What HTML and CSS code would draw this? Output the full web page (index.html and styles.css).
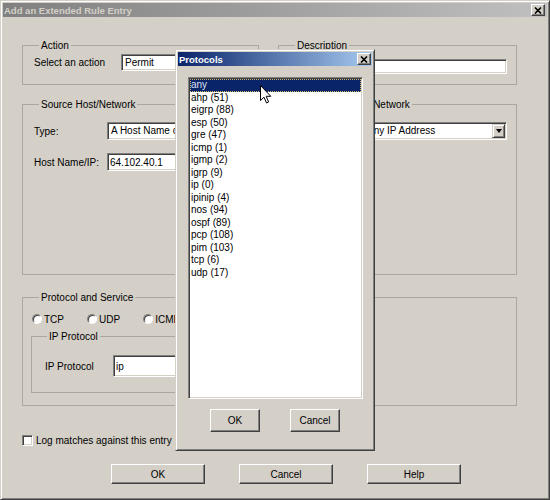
FILE: index.html
```html
<!doctype html>
<html>
<head>
<meta charset="utf-8">
<title>Add an Extended Rule Entry</title>
<link rel="stylesheet" href="styles.css">
</head>
<body>
<div class="window">
  <div class="titlebar inactive">
    <span class="title">Add an Extended Rule Entry</span>
    <span class="close"><svg width="8" height="7" viewBox="0 0 8 7"><path d="M1 0.5 L7 6.5 M7 0.5 L1 6.5" stroke="#000" stroke-width="1.6"/></svg></span>
  </div>

  <div class="content">
    <div class="row top-row">
      <fieldset class="group action">
        <legend>Action</legend>
        <div class="field">
          <label class="lbl wide">Select an action</label>
          <div class="combo"><span class="combo-text">Permit</span><span class="arrow"></span></div>
        </div>
      </fieldset>
      <fieldset class="group desc">
        <legend>Description</legend>
        <input type="text" class="text small">
      </fieldset>
    </div>

    <div class="row host-row">
      <fieldset class="group host">
        <legend>Source Host/Network</legend>
        <div class="field">
          <label class="lbl">Type:</label>
          <div class="combo"><span class="combo-text">A Host Name or IP Address</span><span class="arrow"></span></div>
        </div>
        <div class="field">
          <label class="lbl">Host Name/IP:</label>
          <input type="text" class="text" value="64.102.40.1">
        </div>
      </fieldset>
      <fieldset class="group host">
        <legend>Destination Host/Network</legend>
        <div class="field">
          <label class="lbl">Type:</label>
          <div class="combo"><span class="combo-text">Any IP Address</span><span class="arrow"></span></div>
        </div>
      </fieldset>
    </div>

    <fieldset class="group proto">
      <legend>Protocol and Service</legend>
      <div class="radios">
        <label class="opt"><span class="radio"></span>TCP</label>
        <label class="opt"><span class="radio"></span>UDP</label>
        <label class="opt"><span class="radio"></span>ICMP</label>
        <label class="opt"><span class="radio on"></span>IP</label>
      </div>
      <fieldset class="group sub">
        <legend>IP Protocol</legend>
        <div class="field">
          <label class="lbl narrow">IP Protocol</label>
          <input type="text" class="text tall" value="ip">
        </div>
      </fieldset>
    </fieldset>

    <label class="check"><span class="box"></span>Log matches against this entry</label>

    <div class="buttons">
      <button class="btn">OK</button>
      <button class="btn">Cancel</button>
      <button class="btn">Help</button>
    </div>
  </div>

  <div class="popup">
    <div class="titlebar active">
      <span class="title">Protocols</span>
      <span class="close"><svg width="8" height="7" viewBox="0 0 8 7"><path d="M1 0.5 L7 6.5 M7 0.5 L1 6.5" stroke="#000" stroke-width="1.6"/></svg></span>
    </div>
    <ul class="list">
      <li class="selected">any</li>
      <li>ahp (51)</li>
      <li>eigrp (88)</li>
      <li>esp (50)</li>
      <li>gre (47)</li>
      <li>icmp (1)</li>
      <li>igmp (2)</li>
      <li>igrp (9)</li>
      <li>ip (0)</li>
      <li>ipinip (4)</li>
      <li>nos (94)</li>
      <li>ospf (89)</li>
      <li>pcp (108)</li>
      <li>pim (103)</li>
      <li>tcp (6)</li>
      <li>udp (17)</li>
    </ul>
    <div class="popup-buttons">
      <button class="btn small">OK</button>
      <button class="btn small">Cancel</button>
    </div>
  </div>

  <svg class="cursor" width="12" height="19" viewBox="0 0 12 19"><path d="M0.5 0.5 V15.5 L4 12.2 L6.5 18 L8.6 17 L6.2 11.3 H10.8 Z" fill="#fff" stroke="#000"/></svg>
</div>
</body>
</html>
```

FILE: styles.css
```css
body{
margin:0;
background:#d4d0c8;
font-family:"Liberation Sans", Arial, sans-serif;
font-size:10px;
color:#000;
}
.window{
position:relative;
width:550px;
height:500px;
box-sizing:border-box;
background:#d4d0c8;
border:1px solid;
border-color:#d4d0c8 #404040 #404040 #d4d0c8;
box-shadow:inset 1px 1px 0 #fff, inset -1px -1px 0 #808080;
padding:2px;
}

/* title bars */
.titlebar{
height:14px;
display:flex;
align-items:center;
justify-content:space-between;
padding:0 2px 0 1px;
}
.titlebar.inactive{
background:linear-gradient(to right, #808080, #c0c0c0);
color:#d4d0c8;
}
.titlebar.active{
background:linear-gradient(to right, #0a246a, #a6caf0);
color:#fff;
padding-right:1px;
}
.title{
font-weight:bold;
font-size:9.5px;
}
.close{
width:14px;
height:12px;
box-sizing:border-box;
background:#d4d0c8;
border:1px solid;
border-color:#fff #404040 #404040 #fff;
box-shadow:inset -1px -1px 0 #808080;
display:flex;
align-items:center;
justify-content:center;
}

/* main form */
.content{
padding:23px 0 0 19px;
}
.row{
display:grid;
grid-template-columns:237px 239px;
column-gap:19px;
}
.top-row{
height:40px;
margin-bottom:19px;
}
.host-row{
height:176px;
margin-bottom:17px;
}
.group{
margin:0;
min-width:0;
border:1px solid #aaa7a0;
padding:0 9px 0 11px;
}
.group legend{
padding:0 2px;
margin-left:5px;
line-height:11px;
font-size:10px;
}
.action{
padding-top:3px;
}
.desc{
padding-top:8px;
}
.host{
padding-top:12px;
}
.field{
display:flex;
align-items:center;
margin-bottom:13px;
}
.lbl{
width:73px;
flex:none;
}
.lbl.wide{
width:87px;
}
.lbl.narrow{
width:68px;
}

/* text fields and combos */
.text, .combo{
box-sizing:border-box;
height:17px;
background:#fff;
border:1px solid;
border-color:#808080 #fff #fff #808080;
box-shadow:inset 1px 1px 0 #404040, inset -1px -1px 0 #d4d0c8;
font:10px "Liberation Sans", Arial, sans-serif;
color:#000;
}
.text{
display:block;
padding:0 2px;
outline:none;
flex:1;
min-width:0;
}
.host .text{
height:18px;
}
.desc .text{
width:100%;
height:15px;
}
.text.tall{
flex:none;
width:150px;
height:22px;
}
.combo{
flex:1;
min-width:0;
display:flex;
align-items:stretch;
padding:1px;
}
.host .combo{
height:18px;
}
.combo-text{
flex:1;
overflow:hidden;
white-space:nowrap;
padding-left:2px;
line-height:13px;
}
.arrow{
width:13px;
box-sizing:border-box;
background:#d4d0c8;
border:1px solid;
border-color:#d4d0c8 #404040 #404040 #d4d0c8;
box-shadow:inset 1px 1px 0 #fff, inset -1px -1px 0 #808080;
display:flex;
align-items:center;
justify-content:center;
}
.arrow::after{
content:"";
border-left:3px solid transparent;
border-right:3px solid transparent;
border-top:4px solid #000;
}

/* protocol and service */
.proto{
width:495px;
height:114px;
box-sizing:border-box;
padding:10px 0 0 8px;
}
.proto > legend{
margin-left:8px;
}
.radios{
display:flex;
gap:23px;
height:12px;
align-items:center;
margin-left:1px;
}
.opt{
display:flex;
align-items:center;
gap:2px;
}
.radio{
width:10px;
height:10px;
box-sizing:border-box;
border-radius:50%;
border:1px solid;
border-color:#808080 #fff #fff #808080;
background:#fff;
box-shadow:inset 1px 1px 0 #404040;
}
.radio.on{
background:radial-gradient(circle, #000 0 2px, #fff 2.5px);
}
.sub{
width:334px;
height:62px;
box-sizing:border-box;
margin-top:6px;
padding:13px 0 0 13px;
}
.sub legend{
margin-left:2px;
}
.sub .field{
margin:0;
}

/* checkbox and buttons */
.check{
display:flex;
align-items:center;
gap:3px;
height:11px;
margin-top:29px;
}
.box{
width:11px;
height:11px;
box-sizing:border-box;
background:#fff;
border:1px solid;
border-color:#808080 #fff #fff #808080;
box-shadow:inset 1px 1px 0 #404040, inset -1px -1px 0 #d4d0c8;
}
.buttons{
display:flex;
gap:34px;
margin:18px 0 0 89px;
}
.btn{
width:94px;
height:20px;
box-sizing:border-box;
padding:0;
background:#d4d0c8;
border:1px solid;
border-color:#fff #404040 #404040 #fff;
box-shadow:inset -1px -1px 0 #808080;
font:10px "Liberation Sans", Arial, sans-serif;
color:#000;
}
.btn.small{
width:50px;
height:23px;
}

/* protocols popup */
.popup{
position:absolute;
left:174px;
top:48px;
width:200px;
height:402px;
box-sizing:border-box;
background:#d4d0c8;
border:1px solid;
border-color:#d4d0c8 #404040 #404040 #d4d0c8;
box-shadow:inset 1px 1px 0 #fff, inset -1px -1px 0 #808080;
padding:2px;
}
.list{
list-style:none;
margin:11px 9px 0 10px;
padding:1px;
height:322px;
box-sizing:border-box;
background:#fff;
border:1px solid;
border-color:#808080 #fff #fff #808080;
box-shadow:inset 1px 1px 0 #404040, inset -1px -1px 0 #d4d0c8;
}
.list li{
height:12.5px;
line-height:12.5px;
padding-left:1px;
white-space:nowrap;
}
.list li.selected{
box-sizing:border-box;
background:#0a246a;
color:#dfe3f0;
border:1px dotted #d8b860;
line-height:10.5px;
padding-left:0;
}
.popup-buttons{
display:flex;
justify-content:center;
gap:30px;
margin-top:10px;
}
.cursor{
position:absolute;
left:259px;
top:84px;
}
```
